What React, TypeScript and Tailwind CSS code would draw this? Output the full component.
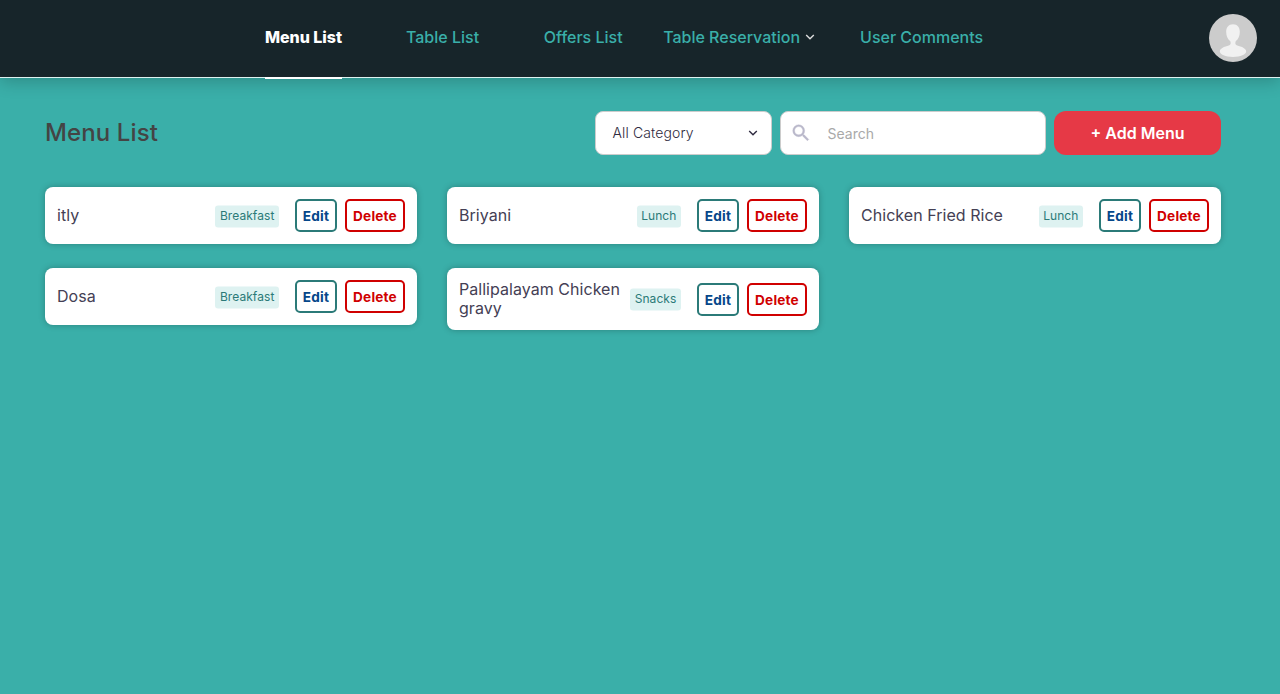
import React from "react";

type MenuItem = { name: string; category: string };

const items: MenuItem[] = [
  { name: "itly", category: "Breakfast" },
  { name: "Briyani", category: "Lunch" },
  { name: "Chicken Fried Rice", category: "Lunch" },
  { name: "Dosa", category: "Breakfast" },
  { name: "Pallipalayam Chicken gravy", category: "Snacks" },
];

function Chevron({ className }: { className: string }) {
  return (
    <svg viewBox="0 0 10 10" fill="none" stroke="currentColor" strokeWidth="1.4" className={className}>
      <path d="M1.2 3 L5 6.8 L8.8 3" />
    </svg>
  );
}

function Avatar() {
  return (
    <svg viewBox="0 0 48 48" className="size-12">
      <circle cx="24" cy="24" r="24" fill="#cccccc" />
      <path
        d="M24 10.3C19.500 10.300 17.200 13.500 17.200 18C17.200 22 18.600 25.200 21.300 27.200C21.900 28.800 21.800 30.200 20.800 31C18.500 32.200 10.800 33.200 10.800 37.600C10.800 40.600 16.500 43 24 43C31.500 43 37.200 40.600 37.200 37.600C37.200 33.200 29.500 32.200 27.200 31C26.200 30.200 26.100 28.800 26.700 27.200C29.400 25.200 30.800 22 30.800 18C30.800 13.500 28.500 10.300 24 10.300Z"
        fill="#f1f1f1"
      />
    </svg>
  );
}

function Header() {
  return (
    <header className="flex h-[78px] border-b border-[#def2f1] bg-[#17252a] pl-[265px] pr-[23px] text-base font-medium text-[#3aafa9] shadow-[0_4px_16px_rgba(0,0,0,0.2)]">
      <nav className="flex h-[79px] flex-1 whitespace-nowrap leading-[75px]">
        <a className="w-[77px] border-b-2 border-white font-extrabold tracking-[-0.05px] text-white">Menu List</a>
        <a className="ml-16">Table List</a>
        <a className="ml-[64.6px]">Offers List</a>
        <a className="ml-[40.5px] flex">
          Table Reservation
          <Chevron className="ml-[5px] mt-8 size-[10px] text-[#dddddd]" />
        </a>
        <a className="ml-[45px]">User Comments</a>
      </nav>
      <div className="pt-[14px]">
        <Avatar />
      </div>
    </header>
  );
}

function MenuCard({ item }: { item: MenuItem }) {
  return (
    <article className="flex items-center rounded-lg bg-white p-3 shadow-[0_0_6px_rgba(0,0,0,0.26)]">
      <h2 className="flex-1 text-base leading-[19px] tracking-[0.04px] text-[#444054]">{item.name}</h2>
      <span className="mr-4 h-[22px] translate-y-[0.4px] rounded-[3px] bg-[#def2f1] px-[4.6px] text-xs leading-[22px] tracking-[0.07px] text-[#2b7a78]">
        {item.category}
      </span>
      <button className="mr-2 h-[33px] w-[42px] rounded-[5px] border-2 border-[#2b7a78] pt-px text-[13.6px] leading-7 font-bold tracking-[0.2px] text-[#05478a]">
        Edit
      </button>
      <button className="h-[33px] w-[60px] rounded-[5px] border-2 border-[#d00000] pt-px text-[13.6px] leading-7 font-bold tracking-[0.2px] text-[#d00000]">
        Delete
      </button>
    </article>
  );
}

export default function App() {
  return (
    <div className="min-h-screen bg-[#3aafa9] font-['Inter',sans-serif]">
      <Header />
      <main className="pl-[45px] pr-[59px] pt-[33px]">
        <div className="flex gap-2">
          <h1 className="flex-1 text-2xl font-medium leading-[44px] tracking-[0.12px] text-[#444444]">Menu List</h1>
          <div className="flex h-11 w-[177px] items-center justify-between rounded-lg border border-[#cccccc] bg-white pl-[16.500px] pr-[13px] text-sm font-light tracking-[0.12px] text-[#2f2b40]">
            All Category
            <Chevron className="size-[10px]" />
          </div>
          <div className="flex h-11 w-[266px] items-center rounded-lg border border-[#cccccc] bg-white pl-[8.500px]">
            <svg viewBox="0 0 24 24" className="size-[22px] text-[#b9b8ca]" fill="currentColor" stroke="currentColor" strokeWidth="0.4">
              <path d="M15.500 14h-.79l-.28-.27A6.471 6.471 0 0 0 16 9.500 6.500 6.500 0 1 0 9.500 16c1.610 0 3.090-.59 4.230-1.570l.27.28v.79l5 4.990L20.490 19l-4.990-5zm-6 0C7.010 14 5 11.990 5 9.500S7.010 5 9.500 5 14 7.010 14 9.500 11.990 14 9.500 14z" />
            </svg>
            <input
              placeholder="Search"
              className="ml-4 mt-[2px] w-[190px] text-sm outline-none placeholder:text-[#a9a9a9]"
            />
          </div>
          <button className="h-11 w-[167px] rounded-xl bg-[#e63946] text-base font-semibold text-white">+ Add Menu</button>
        </div>
        <section className="mt-8 grid grid-cols-3 items-start gap-x-[30px] gap-y-6">
          {items.map((item) => (
            <MenuCard key={item.name} item={item} />
          ))}
        </section>
      </main>
    </div>
  );
}
